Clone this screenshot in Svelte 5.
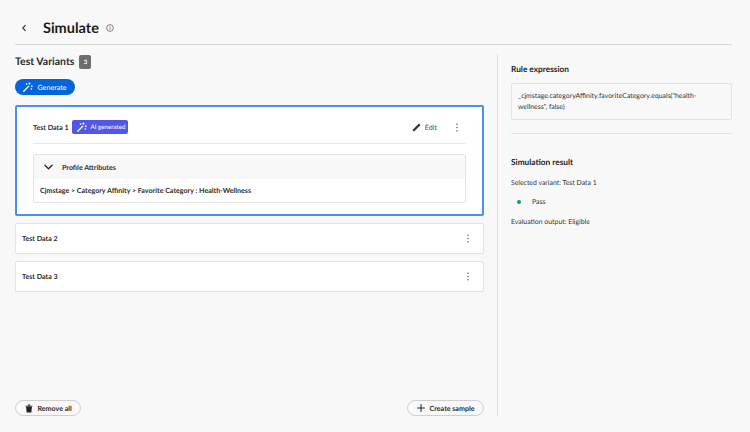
<script>
    const variants = ["Test Data 2", "Test Data 3"];
</script>

{#snippet wand()}
    <svg class="wand" viewBox="0 0 14 14" width="10" height="10">
        <path d="M1 13 L8 6" stroke="currentColor" stroke-width="1.7" stroke-linecap="round" />
        <path d="M9 1v2.4M7.8 2.2h2.4M12.3 5v1.8M11.4 5.9h1.8M5 2.2v1.4M4.3 2.9h1.4M11.6 9.2v1.2M11 9.8h1.2" stroke="currentColor" stroke-width="1" stroke-linecap="round" />
    </svg>
{/snippet}

{#snippet kebab()}
    <svg viewBox="0 0 4 10" width="4" height="9" class="kebab">
        <circle cx="2" cy="1.3" r="0.8" />
        <circle cx="2" cy="5" r="0.8" />
        <circle cx="2" cy="8.7" r="0.8" />
    </svg>
{/snippet}

<div class="page">
    <header class="top">
        <svg class="back" viewBox="0 0 8 10" width="8" height="10">
            <path d="M5.2 2.5 L2.8 5 L5.2 7.5" fill="none" stroke="#444" stroke-width="1.2" stroke-linecap="round" stroke-linejoin="round" />
        </svg>
        <h1>Simulate</h1>
        <svg class="info" viewBox="0 0 10 10" width="8" height="8">
            <circle cx="5" cy="5" r="4.2" fill="none" stroke="#555" stroke-width="0.9" />
            <path d="M5 4.4v2.8M5 2.5v0.9" stroke="#555" stroke-width="1" />
        </svg>
    </header>

    <div class="body">
        <main class="left">
            <div class="title-row">
                <h2>Test Variants</h2>
                <span class="count">3</span>
            </div>
            <button class="generate">{@render wand()}Generate</button>

            <section class="card selected">
                <div class="card-head">
                    <span class="name">Test Data 1</span>
                    <span class="ai">{@render wand()}AI generated</span>
                    <span class="edit">
                        <svg viewBox="0 0 12 12" width="9" height="9">
                            <path d="M0.8 11.2 L1.6 8.2 L8.6 1.2 Q9.2 0.7 9.8 1.2 L10.8 2.2 Q11.3 2.8 10.8 3.4 L3.8 10.4 Z" fill="#333" />
                        </svg>
                        Edit
                    </span>
                    <span class="dots-1">{@render kebab()}</span>
                </div>
                <div class="attrs">
                    <div class="attrs-head">
                        <svg viewBox="0 0 10 6" width="9" height="6">
                            <path d="M1 1 L5 5 L9 1" fill="none" stroke="#222" stroke-width="1.4" stroke-linecap="round" stroke-linejoin="round" />
                        </svg>
                        <span>Profile Attributes</span>
                    </div>
                    <div class="attrs-body">Cjmstage &gt; Category Affinity &gt; Favorite Category : Health-Wellness</div>
                </div>
            </section>

            {#each variants as v}
                <section class="card plain">
                    <span class="name">{v}</span>
                    {@render kebab()}
                </section>
            {/each}

            <div class="foot">
                <button class="outline">
                    <svg viewBox="0 0 10 11" width="8" height="9">
                        <path d="M3.6 1.6V0.6h2.8v1M0.6 2h8.8v0.9H0.6zM1.4 3.4h7.2L8 10.6H2z" fill="#222" />
                    </svg>
                    Remove all
                </button>
                <button class="outline">
                    <svg viewBox="0 0 10 10" width="8" height="8">
                        <path d="M5 0.8v8.4M0.8 5h8.4" stroke="#222" stroke-width="1.3" stroke-linecap="round" />
                    </svg>
                    Create sample
                </button>
            </div>
        </main>

        <aside class="right">
            <h3>Rule expression</h3>
            <div class="expr">_cjmstage.categoryAffinity.favoriteCategory.equals("health-wellness", false)</div>
            <hr />
            <h3 class="sim">Simulation result</h3>
            <p class="selected-line">Selected variant: Test Data 1</p>
            <p class="pass"><i></i>Pass</p>
            <p class="eval">Evaluation output: Eligible</p>
        </aside>
    </div>
</div>

<style>
    :global(body) {
        background: #f8f8f8;
    }

    .page {
        width: 750px;
        height: 432px;
        box-sizing: border-box;
        padding: 0 18px 16px 15px;
        display: flex;
        flex-direction: column;
        font-family: "Lato", sans-serif;
        text-rendering: geometricPrecision;
        color: #2c2c2c;
        overflow: hidden;
    }

    svg {
        flex: none;
    }

    .top {
        flex: none;
        display: flex;
        align-items: center;
        border-bottom: 1px solid #d5d5d5;
        padding: 12px 0 0 5px;
        height: 32px;
    }

    .back {
        margin-right: 15px;
    }

    h1 {
        font-size: 14.5px;
        font-weight: 700;
        margin: 0 7px 0 0;
        color: #1b1b1b;
    }

    .body {
        flex: 1;
        display: flex;
        min-height: 0;
        padding-top: 9px;
    }

    .left {
        width: 469px;
        flex: none;
        display: flex;
        flex-direction: column;
        align-items: flex-start;
    }

    .title-row {
        display: flex;
        align-items: center;
        gap: 5px;
        height: 16px;
    }

    h2 {
        font-size: 10.5px;
        font-weight: 700;
        margin: 0;
    }

    .count {
        width: 12px;
        height: 14px;
        background: #6d6d6d;
        color: #fff;
        font-size: 6px;
        font-weight: 700;
        border-radius: 2px;
        display: flex;
        align-items: center;
        justify-content: center;
    }

    button {
        font-family: inherit;
        text-rendering: inherit;
        cursor: pointer;
    }

    .generate {
        margin-top: 9px;
        height: 16px;
        width: 60px;
        border: none;
        border-radius: 8px;
        background: #0265dc;
        color: #fff;
        font-size: 7.2px;
        font-weight: 400;
        display: flex;
        align-items: center;
        justify-content: center;
        gap: 4px;
        padding: 0;
    }

    .card {
        width: 100%;
        box-sizing: border-box;
        background: #fff;
        border-radius: 2px;
    }

    .selected {
        margin-top: 10px;
        height: 111px;
        border: 2px solid #4b8ff0;
        padding: 0 16px;
    }

    .card-head {
        height: 32px;
        padding-top: 4px;
        display: flex;
        align-items: center;
        border-bottom: 1px solid #e8e8e8;
    }

    .name {
        font-size: 7.1px;
        font-weight: 700;
        color: #2c2c2c;
    }

    .ai {
        margin-left: 3px;
        height: 14px;
        width: 56px;
        background: #5258e4;
        color: #fff;
        font-size: 6.2px;
        border-radius: 2px;
        display: flex;
        align-items: center;
        gap: 4px;
        padding-left: 5px;
        box-sizing: border-box;
        white-space: nowrap;
    }

    .edit {
        margin-left: auto;
        display: flex;
        align-items: center;
        gap: 4px;
        font-size: 7.2px;
        color: #505050;
        margin-right: 18px;
    }

    .dots-1 {
        display: flex;
        margin-right: 7px;
    }

    .kebab {
        fill: #555;
    }

    .attrs {
        margin-top: 10px;
        height: 49px;
        box-sizing: border-box;
        border: 1px solid #e3e3e3;
        border-radius: 2px;
    }

    .attrs-head {
        height: 24px;
        background: #f8f8f8;
        display: flex;
        align-items: center;
        gap: 9px;
        padding-left: 10px;
        font-size: 7.1px;
        font-weight: 700;
    }

    .attrs-body {
        height: 23px;
        display: flex;
        align-items: center;
        padding-left: 6px;
        font-size: 7.1px;
        font-weight: 700;
    }

    .plain {
        height: 31px;
        margin-top: 7px;
        border: 1px solid #e3e3e3;
        display: flex;
        align-items: center;
        justify-content: space-between;
        padding: 0 13px 0 6px;
    }

    .foot {
        margin-top: auto;
        width: 100%;
        display: flex;
        justify-content: space-between;
    }

    .outline {
        height: 16px;
        border: 1px solid #cfcfcf;
        border-radius: 8px;
        background: #f8f8f8;
        color: #2c2c2c;
        font-size: 7.1px;
        font-weight: 700;
        display: flex;
        align-items: center;
        gap: 5px;
        padding: 0 8.5px;
    }

    .right {
        margin-left: 13px;
        flex: 1;
        border-left: 1px solid #dedede;
        padding: 10px 0 0 13px;
        display: flex;
        flex-direction: column;
        font-size: 6.9px;
    }

    h3 {
        font-size: 8.3px;
        font-weight: 700;
        margin: 0;
        color: #222;
    }

    .expr {
        margin-top: 9px;
        height: 37px;
        box-sizing: border-box;
        background: #f8f8f8;
        border: 1px solid #e3e3e3;
        border-radius: 2px;
        padding: 7px 6px 0;
        line-height: 11px;
        color: #333;
    }

    hr {
        width: 100%;
        border: none;
        border-top: 1px solid #e3e3e3;
        margin: 13px 0 0;
    }

    .sim {
        margin-top: 23px;
    }

    p {
        margin: 0;
        color: #333;
    }

    .selected-line {
        margin-top: 12px;
    }

    .pass {
        margin-top: 11px;
        padding-left: 6px;
        display: flex;
        align-items: center;
        gap: 11px;
    }

    .pass i {
        width: 4px;
        height: 4px;
        border-radius: 50%;
        background: #00a36e;
    }

    .eval {
        margin-top: 12px;
    }
</style>
